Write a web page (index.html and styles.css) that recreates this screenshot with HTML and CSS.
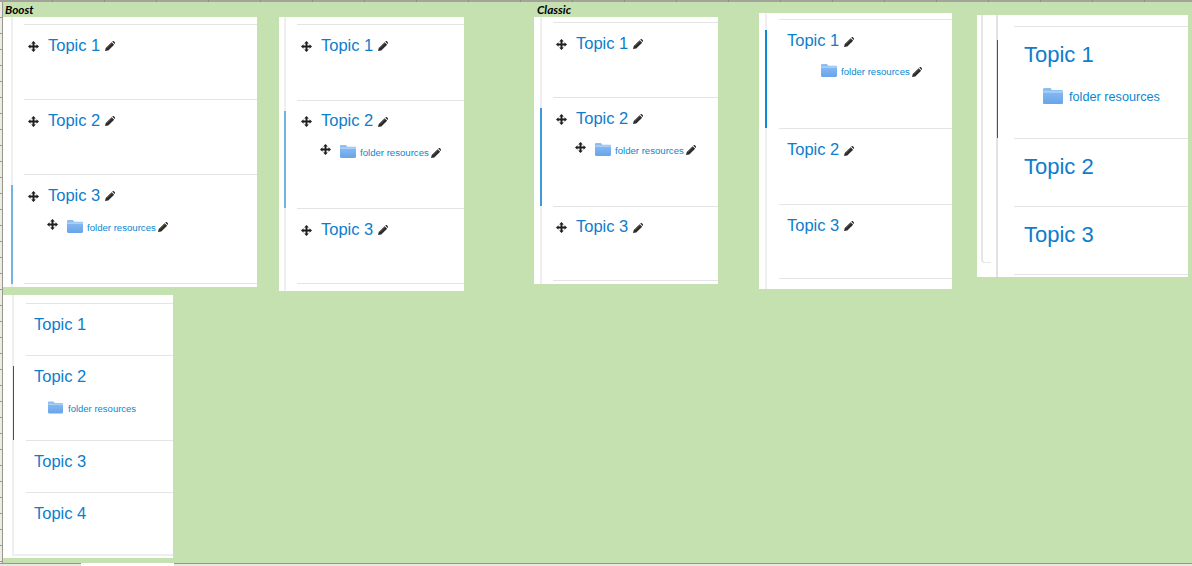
FILE: index.html
```html
<!DOCTYPE html>
<html lang="en">
<head>
<meta charset="utf-8">
<title>Course formats</title>
<link rel="stylesheet" href="styles.css">
</head>
<body>
<svg class="sprite" aria-hidden="true">
  <defs>
    <linearGradient id="folderFill" x1="0" y1="0" x2="0" y2="1">
      <stop offset="0" stop-color="#8fbff3"/>
      <stop offset="1" stop-color="#68a4ea"/>
    </linearGradient>
  </defs>
  <symbol id="move" viewBox="0 0 16 16">
    <path d="M8 0l3.400 3.600H9.400v2.900h3V4.600L16 8l-3.600 3.400V9.500h-3v2.900h2L8 16l-3.400-3.600h2V9.500h-3v1.900L0 8l3.600-3.400v1.900h3V3.600h-2z"/>
  </symbol>
  <symbol id="pencil" viewBox="0 0 16 16">
    <path d="M0 16l1.200-4.800L10.600 1.800l4 4-9.400 9.200z"/>
    <path d="M11.600.9l.6-.5c.6-.5 1.400-.5 2 0l1.600 1.600c.5.6.5 1.400 0 2l-.6.6z"/>
    <path class="pencil-line" d="M3 11.500l8.300-8.200"/>
  </symbol>
  <symbol id="folder" viewBox="0 0 20 16">
    <path fill="url(#folderFill)" d="M1.600 0h5.200c.8 0 1.200.4 1.600 1.200l.4.8h9.600c1 0 1.600.6 1.600 1.600v10.800c0 1-.6 1.600-1.600 1.600H1.600C.6 16 0 15.400 0 14.400V1.600C0 .6.600 0 1.600 0z"/>
    <path fill="#a9cff6" d="M0 4.200c0-1 .6-1.500 1.600-1.500h16.800c1 0 1.600.5 1.600 1.500v.6H0z"/>
  </symbol>
</svg>

<div class="ruler-top"></div>
<div class="workspace">
  <div class="gutter"></div>
  <main class="sheet">
    <span class="sheet-label label-boost">Boost</span>
    <span class="sheet-label label-classic">Classic</span>

    <section class="panel panel-a">
      <div class="course">
        <div class="topic">
          <div class="bar"></div>
          <div class="topic-body">
            <div class="topic-head">
              <svg class="ico-move"><use href="#move"/></svg>
              <a class="topic-link">Topic 1</a>
              <svg class="ico-pencil"><use href="#pencil"/></svg>
            </div>
          </div>
        </div>
        <div class="topic">
          <div class="bar"></div>
          <div class="topic-body">
            <div class="topic-head">
              <svg class="ico-move"><use href="#move"/></svg>
              <a class="topic-link">Topic 2</a>
              <svg class="ico-pencil"><use href="#pencil"/></svg>
            </div>
          </div>
        </div>
        <div class="topic current">
          <div class="bar"></div>
          <div class="topic-body">
            <div class="topic-head">
              <svg class="ico-move"><use href="#move"/></svg>
              <a class="topic-link">Topic 3</a>
              <svg class="ico-pencil"><use href="#pencil"/></svg>
            </div>
            <div class="item">
              <svg class="ico-move"><use href="#move"/></svg>
              <svg class="ico-folder"><use href="#folder"/></svg>
              <a class="item-link">folder resources</a>
              <svg class="ico-pencil"><use href="#pencil"/></svg>
            </div>
          </div>
        </div>
      </div>
    </section>

    <section class="panel panel-b">
      <div class="course">
        <div class="topic">
          <div class="bar"></div>
          <div class="topic-body">
            <div class="topic-head">
              <svg class="ico-move"><use href="#move"/></svg>
              <a class="topic-link">Topic 1</a>
              <svg class="ico-pencil"><use href="#pencil"/></svg>
            </div>
          </div>
        </div>
        <div class="topic current">
          <div class="bar"></div>
          <div class="topic-body">
            <div class="topic-head">
              <svg class="ico-move"><use href="#move"/></svg>
              <a class="topic-link">Topic 2</a>
              <svg class="ico-pencil"><use href="#pencil"/></svg>
            </div>
            <div class="item">
              <svg class="ico-move"><use href="#move"/></svg>
              <svg class="ico-folder"><use href="#folder"/></svg>
              <a class="item-link">folder resources</a>
              <svg class="ico-pencil"><use href="#pencil"/></svg>
            </div>
          </div>
        </div>
        <div class="topic">
          <div class="bar"></div>
          <div class="topic-body">
            <div class="topic-head">
              <svg class="ico-move"><use href="#move"/></svg>
              <a class="topic-link">Topic 3</a>
              <svg class="ico-pencil"><use href="#pencil"/></svg>
            </div>
          </div>
        </div>
      </div>
    </section>

    <section class="panel panel-c">
      <div class="course">
        <div class="topic">
          <div class="bar"></div>
          <div class="topic-body">
            <div class="topic-head">
              <svg class="ico-move"><use href="#move"/></svg>
              <a class="topic-link">Topic 1</a>
              <svg class="ico-pencil"><use href="#pencil"/></svg>
            </div>
          </div>
        </div>
        <div class="topic current">
          <div class="bar"></div>
          <div class="topic-body">
            <div class="topic-head">
              <svg class="ico-move"><use href="#move"/></svg>
              <a class="topic-link">Topic 2</a>
              <svg class="ico-pencil"><use href="#pencil"/></svg>
            </div>
            <div class="item">
              <svg class="ico-move"><use href="#move"/></svg>
              <svg class="ico-folder"><use href="#folder"/></svg>
              <a class="item-link">folder resources</a>
              <svg class="ico-pencil"><use href="#pencil"/></svg>
            </div>
          </div>
        </div>
        <div class="topic">
          <div class="bar"></div>
          <div class="topic-body">
            <div class="topic-head">
              <svg class="ico-move"><use href="#move"/></svg>
              <a class="topic-link">Topic 3</a>
              <svg class="ico-pencil"><use href="#pencil"/></svg>
            </div>
          </div>
        </div>
      </div>
    </section>

    <section class="panel panel-d">
      <div class="course">
        <div class="topic current">
          <div class="bar"></div>
          <div class="topic-body">
            <div class="topic-head">
              <a class="topic-link">Topic 1</a>
              <svg class="ico-pencil"><use href="#pencil"/></svg>
            </div>
            <div class="item">
              <svg class="ico-folder"><use href="#folder"/></svg>
              <a class="item-link">folder resources</a>
              <svg class="ico-pencil"><use href="#pencil"/></svg>
            </div>
          </div>
        </div>
        <div class="topic">
          <div class="bar"></div>
          <div class="topic-body">
            <div class="topic-head">
              <a class="topic-link">Topic 2</a>
              <svg class="ico-pencil"><use href="#pencil"/></svg>
            </div>
          </div>
        </div>
        <div class="topic">
          <div class="bar"></div>
          <div class="topic-body">
            <div class="topic-head">
              <a class="topic-link">Topic 3</a>
              <svg class="ico-pencil"><use href="#pencil"/></svg>
            </div>
          </div>
        </div>
      </div>
    </section>

    <section class="panel panel-e">
      <div class="course">
        <div class="topic current">
          <div class="bar"></div>
          <div class="topic-body">
            <div class="topic-head"><a class="topic-link">Topic 1</a></div>
            <div class="item">
              <svg class="ico-folder"><use href="#folder"/></svg>
              <a class="item-link">folder resources</a>
            </div>
          </div>
        </div>
        <div class="topic">
          <div class="bar"></div>
          <div class="topic-body">
            <div class="topic-head"><a class="topic-link">Topic 2</a></div>
          </div>
        </div>
        <div class="topic">
          <div class="bar"></div>
          <div class="topic-body">
            <div class="topic-head"><a class="topic-link">Topic 3</a></div>
          </div>
        </div>
      </div>
    </section>

    <section class="panel panel-f">
      <div class="course">
        <div class="topic">
          <div class="bar"></div>
          <div class="topic-body">
            <div class="topic-head"><a class="topic-link">Topic 1</a></div>
          </div>
        </div>
        <div class="topic current">
          <div class="bar"></div>
          <div class="topic-body">
            <div class="topic-head"><a class="topic-link">Topic 2</a></div>
            <div class="item">
              <svg class="ico-folder"><use href="#folder"/></svg>
              <a class="item-link">folder resources</a>
            </div>
          </div>
        </div>
        <div class="topic">
          <div class="bar"></div>
          <div class="topic-body">
            <div class="topic-head"><a class="topic-link">Topic 3</a></div>
          </div>
        </div>
        <div class="topic">
          <div class="bar"></div>
          <div class="topic-body">
            <div class="topic-head"><a class="topic-link">Topic 4</a></div>
          </div>
        </div>
      </div>
    </section>
  </main>
</div>
<div class="tabs">
  <div class="tab tab-first"></div>
  <div class="tab tab-active"></div>
  <div class="tab tab-rest"></div>
</div>
</body>
</html>
```

FILE: styles.css
```css
* { box-sizing: border-box; }

html, body {
  margin: 0;
  height: 566px;
  overflow: hidden;
}

body {
  display: flex;
  flex-direction: column;
  font-family: "Liberation Sans", Arial, sans-serif;
  background: #c5e1af;
}

.sprite {
  position: absolute;
  width: 0;
  height: 0;
}

/* spreadsheet chrome */
.ruler-top {
  flex: none;
  height: 2px;
  background:
    repeating-linear-gradient(90deg, transparent 0 51px, #8f8f88 51px 52px) 1px 0,
    #a3a39c;
}

.workspace {
  flex: 1;
  display: flex;
  min-height: 0;
}

.gutter {
  flex: none;
  width: 3px;
  border-right: 1px solid #98988f;
  background: repeating-linear-gradient(180deg, #ecebe4 0 15px, #98988f 15px 16px);
}

.sheet {
  flex: 1;
  position: relative;
  background: #c5e1af;
}

.tabs {
  flex: none;
  display: flex;
  height: 3px;
}

.tab { border-top: 1px solid #98988f; background: #e8e8e2; }
.tab-first { width: 81px; }
.tab-active { width: 93px; background: #fff; border-top-color: #fff; }
.tab-rest { flex: 1; }

.sheet-label {
  position: absolute;
  top: 1px;
  font-family: Lato, "Open Sans", sans-serif;
  font-size: 11.800px;
  line-height: 13px;
  font-weight: 700;
  font-style: italic;
  color: #000;
}

.label-boost { left: 2px; }
.label-classic { left: 534px; }

/* pasted screenshots sit freely on the sheet */
.panel {
  position: absolute;
  background: #fff;
  padding-left: var(--rail-x);
  --bar-color: #74b4e0;
  --topic-size: 16.5px;
  --item-size: 9.6px;
  --head-h: 40px;
  --item-h: 24px;
  --topic-x: 24px;
  --row-h: 75px;
  --cur-h: 109px;
  --body-gap: 11px;
  --bar-top: 11px;
  --bar-w: 2px;
  --rail-x: 5px;
  --top: 7px;
}

.panel-a { left: 0; top: 15px; width: 254px; height: 270px; --rail-x: 8px; --cur-h: 110px; }
.panel-b { left: 276px; top: 15px; width: 185px; height: 274px; --row-h: 75.5px; --cur-h: 108.5px; }
.panel-c { left: 531px; top: 15px; width: 184px; height: 267px; --rail-x: 6px; --top: 5px; --topic-x: 23px; --row-h: 75.3px; --cur-h: 108.5px; --bar-color: #3d9ad6; }
.panel-d { left: 756px; top: 11px; width: 193px; height: 276px; --rail-x: 6px; --top: 6px; --body-gap: 12px; --topic-x: 8px; --head-h: 41px; --item-h: 21px; --row-h: 75.5px; --bar-color: #1088d6; }
.panel-e { left: 974px; top: 13px; width: 211px; height: 262px; --rail-x: 19px; --top: 11px; --body-gap: 16px; --topic-x: 10px; --topic-size: 22px; --item-size: 12.7px; --head-h: 56px; --item-h: 28px; --row-h: 68.5px; --cur-h: 111.5px; --bar-top: 14px; --bar-w: 1px; --bar-color: #0b5fa8; }
.panel-f { left: 0; top: 293px; width: 170px; height: 263px; --rail-x: 9px; --top: 8px; --body-gap: 12px; --topic-x: 8px; --item-size: 9.5px; --head-h: 40px; --row-h: 52px; --cur-h: 85px; --bar-w: 1px; --bar-color: #0b5fa8; }

.panel-e::before {
  content: "";
  position: absolute;
  left: 4px;
  top: 0;
  width: 8px;
  height: 247px;
  border: 1px solid #e6e6e6;
  border-width: 0 0 1px 2px;
  border-bottom-left-radius: 4px;
}

.course {
  height: 100%;
  padding-top: var(--top);
  border-left: 2px solid #efefef;
}

.panel-e .course { border-left-color: #e2e2e2; }
.panel-f .course { border-bottom: 2px solid #eee; height: 261px; }

.topic {
  display: flex;
  height: var(--row-h);
}

.topic.current { height: var(--cur-h); }
.panel-f .topic:last-child { height: 63px; }

.bar {
  flex: none;
  width: var(--bar-w);
  margin: var(--bar-top) 0 0 calc(0px - var(--bar-w));
}

.current .bar { background: var(--bar-color); }

.topic-body {
  flex: 1;
  min-width: 0;
  margin-left: var(--body-gap);
  border-top: 1px solid #e4e4e4;
}

.topic:last-child .topic-body { border-bottom: 1px solid #e4e4e4; }
.panel-f .topic:last-child .topic-body { border-bottom: 0; }

.topic-head {
  display: flex;
  align-items: center;
  height: var(--head-h);
  padding-left: var(--topic-x);
}

.topic-head .ico-move {
  margin-left: -20px;
  margin-right: 9px;
  margin-top: 2px;
}

.topic-link {
  font-size: var(--topic-size);
  color: #0d7dcc;
}

.topic-head .ico-pencil {
  margin-left: 5px;
  margin-top: 2px;
}

.item {
  display: flex;
  align-items: center;
  height: var(--item-h);
  padding-left: calc(var(--topic-x) - 1px);
}

.item .ico-move {
  margin-right: 9px;
  margin-bottom: 6px;
}

.item-link {
  font-size: var(--item-size);
  color: #0a88cf;
}

.item .ico-pencil { margin-left: 2px; }

.ico-move {
  flex: none;
  width: 11px;
  height: 11px;
  fill: #1f1f1f;
}

.ico-pencil {
  flex: none;
  width: 10px;
  height: 10px;
  fill: #2c2c2c;
}

.pencil-line {
  fill: none;
  stroke: #8a6a4a;
  stroke-width: 0.8;
}

.ico-folder {
  flex: none;
  width: 16px;
  height: 13px;
  margin-right: 4px;
  margin-bottom: 2px;
}

.panel-d .item { padding-left: 42px; }
.panel-e .item { padding-left: 29px; }
.panel-e .ico-folder { width: 20px; height: 16px; margin-right: 6px; }
.panel-f .item { padding-left: 22px; }
.panel-f .ico-folder { width: 15px; height: 13px; margin-right: 5px; }
```
